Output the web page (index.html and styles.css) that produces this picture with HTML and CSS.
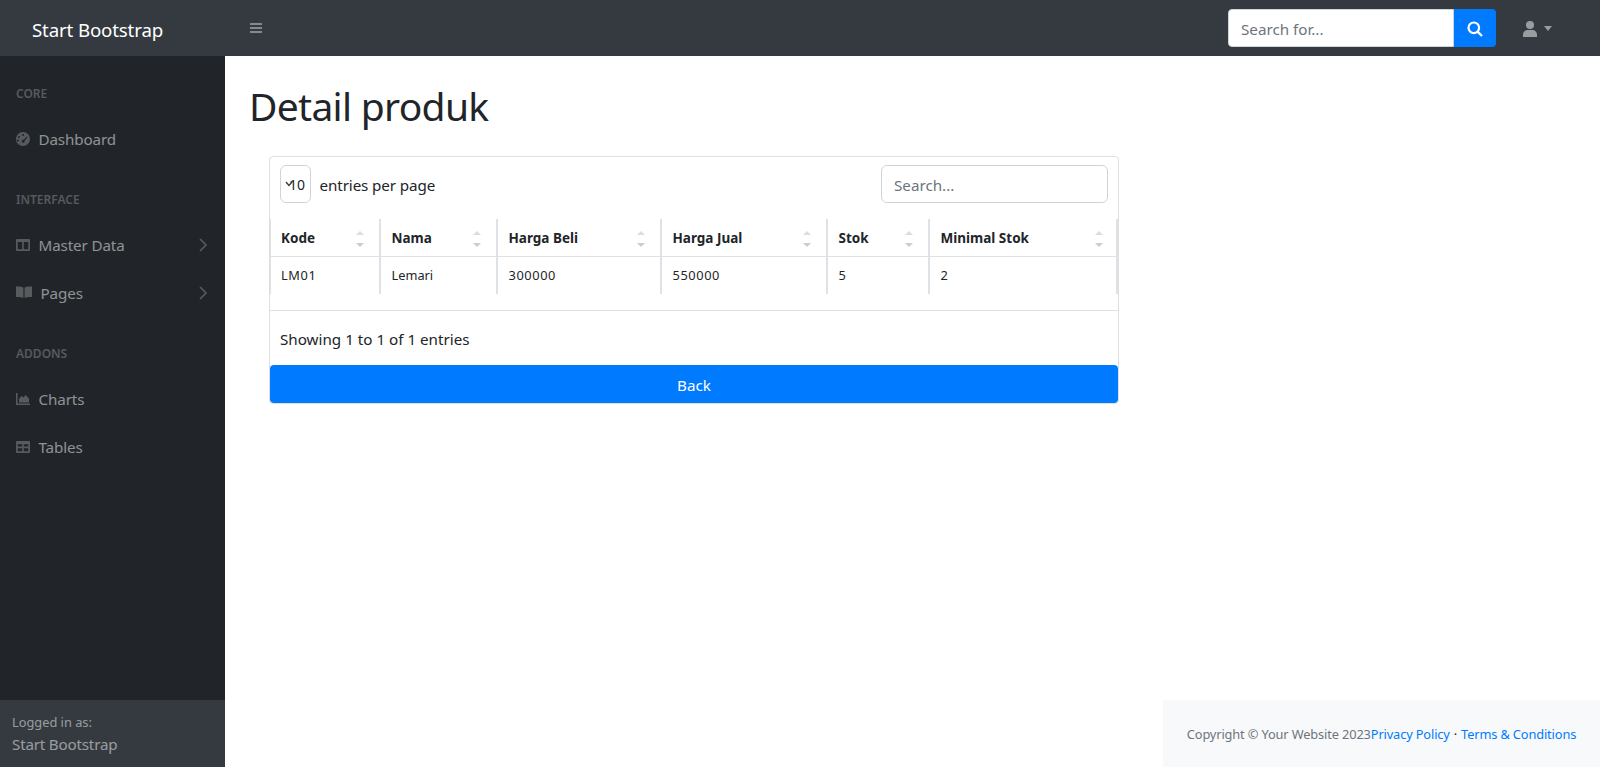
FILE: index.html
```html
<!DOCTYPE html>
<html lang="en">

<head>
    <meta charset="UTF-8">
    <meta name="viewport" content="width=device-width, initial-scale=1.0">
    <title>Detail produk</title>
    <link rel="stylesheet" href="styles.css">
</head>

<body>
    <nav class="topnav">
        <a class="brand">Start Bootstrap</a>
        <svg class="toggle" viewBox="0 0 12 12" width="12" height="12"><path d="M0 1h12v2H0zM0 5h12v2H0zM0 9h12v2H0z" /></svg>
        <form class="nav-search">
            <input type="text" placeholder="Search for...">
            <button type="button">
                <svg viewBox="0 0 16 16" width="16" height="16"><circle cx="6.8" cy="6.8" r="5.3" fill="none" stroke="#fff" stroke-width="2.2" /><path d="M10.6 10.6l4.4 4.4" stroke="#fff" stroke-width="2.4" /></svg>
            </button>
        </form>
        <div class="user-menu">
            <svg viewBox="0 0 14 16" width="14" height="16"><circle cx="7" cy="4" r="4" /><path d="M0 16v-2c0-3 2-5 5-5h4c3 0 5 2 5 5v2z" /></svg>
            <span class="caret"></span>
        </div>
    </nav>

    <div class="layout">
        <aside class="sidenav">
            <div class="sidenav-menu">
                <div class="menu-heading">CORE</div>
                <a class="menu-link">
                    <svg viewBox="0 0 14 14" width="14" height="14"><path fill-rule="evenodd" d="M7 0a7 7 0 1 1 0 14A7 7 0 0 1 7 0zM7 2a1 1 0 1 0 0 2 1 1 0 0 0 0-2zM3 4a1 1 0 1 0 0 2 1 1 0 0 0 0-2zM11 4.500L7.600 7.800a1.500 1.500 0 1 0 1 1L11.800 5zM2 7.500a1 1 0 1 0 0 2 1 1 0 0 0 0-2z" /></svg>
                    <span>Dashboard</span>
                </a>
                <div class="menu-heading">INTERFACE</div>
                <a class="menu-link">
                    <svg viewBox="0 0 14 12" width="14" height="12"><path fill-rule="evenodd" d="M1 0h12a1 1 0 0 1 1 1v10a1 1 0 0 1-1 1H1a1 1 0 0 1-1-1V1a1 1 0 0 1 1-1zM1.700 3v7.300h4.500V3zM7.800 3v7.300h4.500V3z" /></svg>
                    <span>Master Data</span>
                    <svg class="chevron" viewBox="0 0 8 14" width="8" height="14"><path d="M1 1l6 6-6 6" fill="none" stroke-width="1.600" /></svg>
                </a>
                <a class="menu-link">
                    <svg class="book" viewBox="0 0 16 12" width="16" height="12"><path d="M0 .6C2.500.2 5.500.5 7.400 1.600V12C5.500 11 2.500 10.700 0 11zM16 .6C13.500.2 10.500.5 8.600 1.600V12c1.900-1 4.900-1.300 7.400-1z" /></svg>
                    <span>Pages</span>
                    <svg class="chevron" viewBox="0 0 8 14" width="8" height="14"><path d="M1 1l6 6-6 6" fill="none" stroke-width="1.600" /></svg>
                </a>
                <div class="menu-heading">ADDONS</div>
                <a class="menu-link">
                    <svg viewBox="0 0 14 12" width="14" height="12"><path d="M0 0h1.500v10.500H14V12H0zM3 9.500V6l2.500-3 2 1.500L9.500 2 13 5.500v4z" /></svg>
                    <span>Charts</span>
                </a>
                <a class="menu-link">
                    <svg viewBox="0 0 14 12" width="14" height="12"><path fill-rule="evenodd" d="M1 0h12a1 1 0 0 1 1 1v10a1 1 0 0 1-1 1H1a1 1 0 0 1-1-1V1a1 1 0 0 1 1-1zM1.700 3.200v2.400h4.500V3.200zM7.800 3.200v2.400h4.500V3.200zM1.700 7.200v3h4.500v-3zM7.800 7.200v3h4.500v-3z" /></svg>
                    <span>Tables</span>
                </a>
            </div>
            <div class="sidenav-footer">
                <div class="small">Logged in as:</div>
                <div class="signed-name">Start Bootstrap</div>
            </div>
        </aside>

        <div class="content">
            <main>
                <h1>Detail produk</h1>
                <div class="card">
                    <div class="dt-top">
                        <div class="dt-length">
                            <div class="dt-select">10<svg viewBox="0 0 8 6" width="8" height="6"><path d="M1 1l3 3.500L7 1" fill="none" stroke="#343a40" stroke-width="1.300" /></svg></div>
                            <span>entries per page</span>
                        </div>
                        <input class="dt-search" type="text" placeholder="Search...">
                    </div>
                    <table>
                        <thead>
                            <tr>
                                <th class="col-kode">Kode<span class="sorter"></span></th>
                                <th class="col-nama">Nama<span class="sorter"></span></th>
                                <th class="col-beli">Harga Beli<span class="sorter"></span></th>
                                <th class="col-jual">Harga Jual<span class="sorter"></span></th>
                                <th class="col-stok">Stok<span class="sorter"></span></th>
                                <th class="col-min">Minimal Stok<span class="sorter"></span></th>
                            </tr>
                        </thead>
                        <tbody>
                            <tr>
                                <td class="num">LM01</td>
                                <td>Lemari</td>
                                <td class="num">300000</td>
                                <td class="num">550000</td>
                                <td>5</td>
                                <td>2</td>
                            </tr>
                        </tbody>
                    </table>
                    <div class="dt-bottom">Showing 1 to 1 of 1 entries</div>
                    <a class="btn-back">Back</a>
                </div>
            </main>
            <footer class="page-footer">
                <span class="muted">Copyright &copy; Your Website 2023</span><a>Privacy Policy</a><span class="dot">&middot;</span><a>Terms &amp; Conditions</a>
            </footer>
        </div>
    </div>
</body>

</html>
```

FILE: styles.css
```css
* {
    box-sizing: border-box;
}

body {
    margin: 0;
    height: 767px;
    display: flex;
    flex-direction: column;
    overflow: hidden;
    font-family: "Noto Sans", "Open Sans", sans-serif;
    font-size: 16px;
    line-height: 1.5;
    color: #212529;
    background-color: #fff;
}

/* top bar */
.topnav {
    height: 56px;
    flex: none;
    display: flex;
    align-items: center;
    background-color: #343a40;
}

.brand {
    width: 225px;
    height: 56px;
    padding-left: 32px;
    line-height: 60px;
    font-size: 18.7px;
    letter-spacing: -0.15px;
    color: #fff;
    background-color: #343a40;
}

.toggle {
    margin-left: 25px;
    fill: rgba(255, 255, 255, 0.4);
}

.nav-search {
    margin-left: auto;
    display: flex;
    height: 38px;
}

.nav-search input {
    width: 226px;
    height: 38px;
    padding: 8px 12px 6px;
    border: 1px solid #ced4da;
    border-radius: 4px 0 0 4px;
    font: inherit;
    font-size: 15.2px;
}

.nav-search input::placeholder,
.dt-search::placeholder {
    color: #6c757d;
    opacity: 1;
}

.nav-search button {
    width: 42px;
    height: 38px;
    border: none;
    border-radius: 0 4px 4px 0;
    background-color: #007bff;
    display: flex;
    align-items: center;
    justify-content: center;
    padding: 2px 0 0;
}

.user-menu {
    margin-left: 27px;
    margin-right: 48px;
    margin-top: 2px;
    display: flex;
    align-items: center;
    gap: 7px;
    fill: rgba(255, 255, 255, 0.5);
}

.caret {
    border-top: 5px solid rgba(255, 255, 255, 0.5);
    border-left: 4px solid transparent;
    border-right: 4px solid transparent;
    margin-bottom: 1px;
}

/* body */
.layout {
    flex: 1;
    min-height: 0;
    display: flex;
}

.sidenav {
    width: 225px;
    flex: none;
    display: flex;
    flex-direction: column;
    background-color: #212529;
    color: rgba(255, 255, 255, 0.5);
}

.sidenav-menu {
    flex: 1;
}

.menu-heading {
    height: 59px;
    padding: 29px 16px 0;
    font-size: 12px;
    font-weight: 600;
    color: rgba(255, 255, 255, 0.25);
}

.menu-link {
    height: 48px;
    padding: 0 16px;
    display: flex;
    align-items: center;
    gap: 8px;
    font-size: 15.2px;
    letter-spacing: -0.12px;
    fill: rgba(255, 255, 255, 0.25);
}

.menu-link span {
    margin-left: 0.5px;
}

.menu-link + .menu-heading {
    height: 58px;
    padding-top: 28px;
}

.book {
    margin-bottom: 2px;
}

.chevron {
    margin-left: auto;
    margin-right: 2px;
    stroke: rgba(255, 255, 255, 0.25);
}

.sidenav-footer {
    height: 67px;
    padding: 13px 12px 0;
    background-color: #343a40;
}

.small {
    font-size: 12.8px;
}

.signed-name {
    margin-top: 1px;
    font-size: 15.2px;
    letter-spacing: -0.2px;
}

.content {
    flex: 1;
    min-width: 0;
    display: flex;
    flex-direction: column;
}

main {
    flex: 1;
    padding: 0 24px;
}

h1 {
    margin: 26px 0 26px;
    font-size: 39px;
    font-weight: 400;
    line-height: 48px;
    letter-spacing: -0.7px;
}

.card {
    width: 850px;
    margin-left: 20px;
    border: 1px solid rgba(0, 0, 0, 0.125);
    border-radius: 4px;
}

.dt-top {
    height: 62px;
    padding: 8px 10px 0;
    display: flex;
    justify-content: space-between;
}

.dt-length {
    display: flex;
    align-items: center;
    gap: 8.5px;
    height: 38px;
    font-size: 15.2px;
    letter-spacing: -0.1px;
}

.dt-length span {
    margin-top: 2px;
}

.dt-select {
    position: relative;
    width: 31px;
    height: 38px;
    padding-left: 8px;
    border: 1px solid #ced4da;
    border-radius: 6px;
    font-size: 14px;
    line-height: 38px;
}

.dt-select svg {
    position: absolute;
    left: 4px;
    top: 15px;
}

.dt-search {
    width: 227px;
    height: 38px;
    padding: 8px 12px 6px;
    border: 1px solid #ced4da;
    border-radius: 6px;
    font: inherit;
    font-size: 15.2px;
}

table {
    width: 100%;
    border-collapse: collapse;
    table-layout: fixed;
    font-size: 13.5px;
}

th {
    position: relative;
    height: 37px;
    padding: 2px 10px 0 11px;
    text-align: left;
    font-weight: 700;
    border-bottom: 1px solid #dee2e6;
    border-right: 2px solid #dee2e6;
}

td {
    height: 38px;
    padding: 0 10px 0 11px;
    font-size: 12.8px;
    border-right: 2px solid #dee2e6;
}

th:first-child,
td:first-child {
    padding-left: 10px;
    border-left: 1px solid #dee2e6;
}

td.num {
    letter-spacing: 0.6px;
}

.col-kode { width: 109px; }
.col-nama { width: 117px; }
.col-beli { width: 164px; }
.col-jual { width: 166px; }
.col-stok { width: 102px; }

.sorter {
    position: absolute;
    right: 15px;
    top: 12px;
    width: 8px;
    height: 16px;
}

.col-min .sorter {
    right: 13px;
}

.sorter::before {
    content: "";
    position: absolute;
    left: 0;
    top: 0;
    border-bottom: 4px solid #ddd;
    border-left: 4px solid transparent;
    border-right: 4px solid transparent;
}

.sorter::after {
    content: "";
    position: absolute;
    left: 0;
    bottom: 0;
    border-top: 4px solid #ccc;
    border-left: 4px solid transparent;
    border-right: 4px solid transparent;
}

.dt-bottom {
    margin-top: 16px;
    height: 55px;
    padding: 17px 10px 0;
    font-size: 15.2px;
    border-top: 1px solid #dee2e6;
}

.btn-back {
    display: block;
    height: 38px;
    line-height: 40px;
    text-align: center;
    color: #fff;
    font-size: 15.2px;
    background-color: #007bff;
    border-radius: 4px;
}

/* footer */
.page-footer {
    margin-left: auto;
    width: 437px;
    height: 67px;
    flex: none;
    padding-top: 2px;
    display: flex;
    align-items: center;
    justify-content: center;
    background-color: #f8f9fa;
    font-size: 12.8px;
    letter-spacing: -0.13px;
    color: #007bff;
}

.muted {
    color: #6c757d;
}

.dot {
    margin: 0 4px;
    color: #212529;
}
```
